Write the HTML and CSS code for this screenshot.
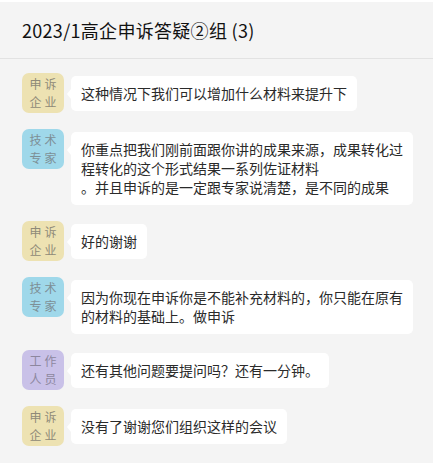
FILE: index.html
```html
<!DOCTYPE html>
<html lang="zh-CN">
<head>
    <meta charset="UTF-8">
    <meta name="viewport" content="width=device-width, initial-scale=1.0">
    <title>2023/1高企申诉答疑②组</title>
    <link rel="stylesheet" href="styles.css">
</head>
<body>
    <div class="chat-window">
        <div class="chat-header">
            <h1>2023/1高企申诉答疑②组 (3)</h1>
        </div>
        <div class="chat-list">
            <div class="msg">
                <div class="avatar avatar-company">申诉<br>企业</div>
                <div class="bubble">这种情况下我们可以增加什么材料来提升下</div>
            </div>
            <div class="msg">
                <div class="avatar avatar-expert">技术<br>专家</div>
                <div class="bubble">你重点把我们刚前面跟你讲的成果来源，成果转化过程转化的这个形式结果一系列佐证材料<br>。并且申诉的是一定跟专家说清楚，是不同的成果</div>
            </div>
            <div class="msg">
                <div class="avatar avatar-company">申诉<br>企业</div>
                <div class="bubble">好的谢谢</div>
            </div>
            <div class="msg">
                <div class="avatar avatar-expert">技术<br>专家</div>
                <div class="bubble">因为你现在申诉你是不能补充材料的，你只能在原有的材料的基础上。做申诉</div>
            </div>
            <div class="msg">
                <div class="avatar avatar-staff">工作<br>人员</div>
                <div class="bubble">还有其他问题要提问吗？还有一分钟。</div>
            </div>
            <div class="msg">
                <div class="avatar avatar-company">申诉<br>企业</div>
                <div class="bubble">没有了谢谢您们组织这样的会议</div>
            </div>
        </div>
    </div>
</body>
</html>
```

FILE: styles.css
```css
html, body {
    margin: 0;
    padding: 0;
}
body {
    font-family: 'Noto Sans CJK SC', 'Noto Sans', sans-serif;
    background-color: #fff;
    width: 433px;
    height: 463px;
    overflow: hidden;
}
.chat-window {
    margin-top: 2px;
    background-color: #f4f4f4;
    height: 461px;
}
.chat-header {
    height: 56px;
    border-bottom: 1px solid #e2e2e2;
    display: flex;
    align-items: center;
    padding-left: 22px;
}
.chat-header h1 {
    margin: 0;
    font-size: 18px;
    font-weight: normal;
    color: #111;
    letter-spacing: 0.3px;
}
.chat-list {
    padding: 14px 20px 0 22px;
    display: flex;
    flex-direction: column;
    gap: 16px;
}
.msg {
    display: flex;
    align-items: flex-start;
}
.avatar {
    width: 42px;
    height: 40px;
    flex-shrink: 0;
    border-radius: 7px;
    font-size: 12px;
    line-height: 18px;
    letter-spacing: 3px;
    color: #8f8a78;
    text-align: center;
    display: flex;
    align-items: center;
    justify-content: center;
    padding-left: 3px;
    box-sizing: border-box;
}
.avatar-company {
    background-color: #ede2b2;
}
.avatar-expert {
    background-color: #9fd8ea;
    color: #7d8f96;
}
.avatar-staff {
    background-color: #c9c1e8;
    color: #8d879e;
}
.bubble {
    position: relative;
    margin-top: 3px;
    margin-left: 7px;
    max-width: 322px;
    padding: 8px 10px;
    background-color: #fff;
    border-radius: 5px;
    font-size: 14px;
    line-height: 19px;
    color: #2a2a2a;
}
.bubble::before {
    content: "";
    position: absolute;
    left: -4px;
    top: 13px;
    border-top: 5px solid transparent;
    border-bottom: 5px solid transparent;
    border-right: 4px solid #fff;
}
```
